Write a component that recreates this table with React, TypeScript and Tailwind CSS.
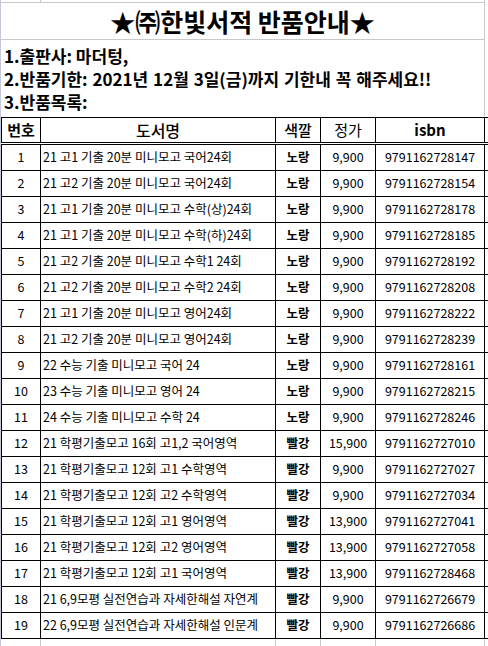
import React from "react";

const rows: [string, string, string, string, string][] = [
  ["1", "21 고1 기출 20분 미니모고 국어24회", "노랑", "9,900", "9791162728147"],
  ["2", "21 고2 기출 20분 미니모고 국어24회", "노랑", "9,900", "9791162728154"],
  ["3", "21 고1 기출 20분 미니모고 수학(상)24회", "노랑", "9,900", "9791162728178"],
  ["4", "21 고1 기출 20분 미니모고 수학(하)24회", "노랑", "9,900", "9791162728185"],
  ["5", "21 고2 기출 20분 미니모고 수학1 24회", "노랑", "9,900", "9791162728192"],
  ["6", "21 고2 기출 20분 미니모고 수학2 24회", "노랑", "9,900", "9791162728208"],
  ["7", "21 고1 기출 20분 미니모고 영어24회", "노랑", "9,900", "9791162728222"],
  ["8", "21 고2 기출 20분 미니모고 영어24회", "노랑", "9,900", "9791162728239"],
  ["9", "22 수능 기출 미니모고 국어 24", "노랑", "9,900", "9791162728161"],
  ["10", "23 수능 기출 미니모고 영어 24", "노랑", "9,900", "9791162728215"],
  ["11", "24 수능 기출 미니모고 수학 24", "노랑", "9,900", "9791162728246"],
  ["12", "21 학평기출모고 16회 고1,2 국어영역", "빨강", "15,900", "9791162727010"],
  ["13", "21 학평기출모고 12회 고1 수학영역", "빨강", "9,900", "9791162727027"],
  ["14", "21 학평기출모고 12회 고2 수학영역", "빨강", "9,900", "9791162727034"],
  ["15", "21 학평기출모고 12회 고1 영어영역", "빨강", "13,900", "9791162727041"],
  ["16", "21 학평기출모고 12회 고2 영어영역", "빨강", "13,900", "9791162727058"],
  ["17", "21 학평기출모고 12회 고1 국어영역", "빨강", "13,900", "9791162728468"],
  ["18", "21 6,9모평 실전연습과 자세한해설 자연계", "빨강", "9,900", "9791162726679"],
  ["19", "22 6,9모평 실전연습과 자세한해설 인문계", "빨강", "9,900", "9791162726686"],
];

export default function App() {
  return (
    <div className="w-[488px] h-[646px] bg-white overflow-hidden flex font-['Noto_Sans_CJK_KR','Noto_Sans',sans-serif] text-black">
      <div className="w-[1px] shrink-0 bg-[#c3cad6]" />
      <div className="flex flex-col w-[487px]">
        {/* top area */}
        <div className="w-[484px] border-r border-[#c9c9c9] flex flex-col">
          <div className="h-[3px] border-b border-[#c9c9c9] flex">
            <div className="w-[40px] border-r border-[#c9c9c9]" />
          </div>
          <div className="h-[37px] border-b border-[#c9c9c9] flex items-center justify-center">
            <span className="text-[25px] font-bold leading-none">★㈜한빛서적 반품안내★</span>
          </div>
          <div className="h-[77px] pt-[4px] pl-[3px] flex flex-col text-[17px] font-bold">
            <div className="h-[23px] leading-[23px] whitespace-nowrap">1.출판사: 마더텅,</div>
            <div className="h-[23px] leading-[23px] whitespace-nowrap [word-spacing:1px]">2.반품기한: 2021년 12월 3일(금)까지 기한내 꼭 해주세요!!</div>
            <div className="h-[23px] leading-[23px] whitespace-nowrap">3.반품목록:</div>
          </div>
        </div>
        {/* header */}
        <div className="flex h-[29px] border-t border-b-[3px] border-double border-black text-[15px]">
          <div className="w-[40px] border-l border-r border-black flex items-center justify-center font-bold">번호</div>
          <div className="w-[235px] border-r border-black flex items-center justify-center text-[16px] font-medium">도서명</div>
          <div className="w-[45px] border-r border-black flex items-center justify-center font-medium">색깔</div>
          <div className="w-[55px] border-r border-black flex items-center justify-center">정가</div>
          <div className="w-[109px] border-r border-black flex items-center justify-center font-bold">isbn</div>
        </div>
        {rows.map((r) => (
          <div key={r[0]} className="flex h-[26px] border-b border-black text-[12.5px] shrink-0">
            <div className="w-[40px] border-l border-r border-black flex items-center justify-center">{r[0]}</div>
            <div className="w-[235px] border-r border-black flex items-center pl-[2px] overflow-hidden whitespace-nowrap">{r[1]}</div>
            <div className="w-[45px] border-r border-black flex items-center justify-center font-bold">{r[2]}</div>
            <div className="w-[55px] border-r border-black flex items-center justify-center">{r[3]}</div>
            <div className="w-[109px] border-r border-black flex items-center justify-center">{r[4]}</div>
          </div>
        ))}
        <div className="flex h-[20px] shrink-0">
          <div className="w-[40px] border-r border-[#c9c9c9]" />
          <div className="w-[235px] border-r border-[#c9c9c9]" />
          <div className="w-[45px] border-r border-[#c9c9c9]" />
          <div className="w-[55px] border-r border-[#c9c9c9]" />
          <div className="w-[109px] border-r border-[#c9c9c9]" />
        </div>
      </div>
    </div>
  );
}
